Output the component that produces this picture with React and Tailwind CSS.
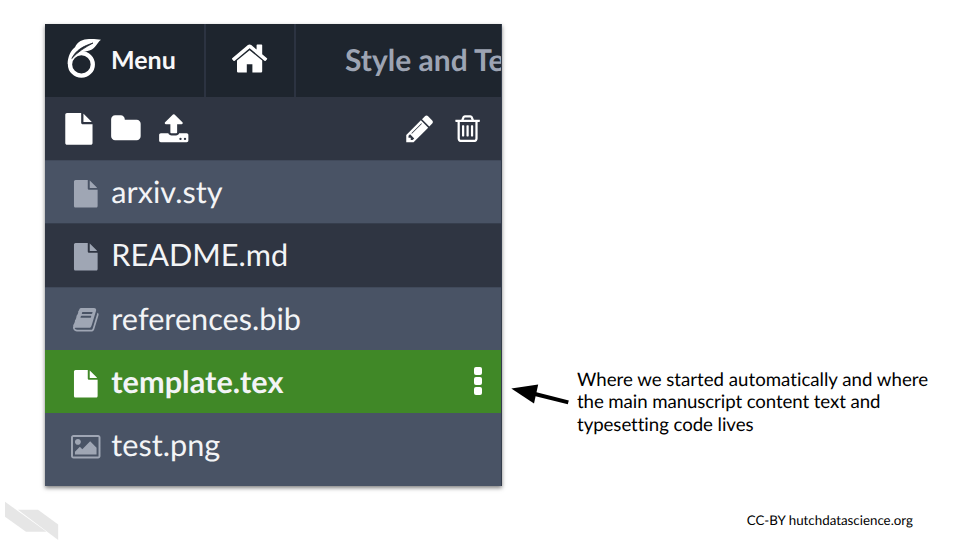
import React from "react";

const PATHS = {
  home: "M1472 992v480q0 26-19 45t-45 19h-384v-384h-256v384h-384q-26 0-45-19t-19-45v-480q0-1 .5-3t.5-3l575-474 575 474q1 2 1 6zm223-69l-62 74q-8 9-21 11h-3q-13 0-21-7l-692-577-692 577q-12 8-24 7-13-2-21-11l-62-74q-8-10-7-23.5t11-21.5l719-599q32-26 76-26t76 26l244 204v-195q0-14 9-23t23-9h192q14 0 23 9t9 23v408l219 182q10 8 11 21.5t-7 23.5z",
  trash: "M704 736v576q0 14-9 23t-23 9h-64q-14 0-23-9t-9-23v-576q0-14 9-23t23-9h64q14 0 23 9t9 23zm256 0v576q0 14-9 23t-23 9h-64q-14 0-23-9t-9-23v-576q0-14 9-23t23-9h64q14 0 23 9t9 23zm256 0v576q0 14-9 23t-23 9h-64q-14 0-23-9t-9-23v-576q0-14 9-23t23-9h64q14 0 23 9t9 23zm128 724v-948h-896v948q0 22 7 40.5t14.5 27 10.5 8.5h832q3 0 10.5-8.5t14.5-27 7-40.5zm-672-1076h448l-48-117q-7-9-17-11h-317q-10 2-17 11zm928 32v64q0 14-9 23t-23 9h-96v948q0 83-47 143.5t-113 60.5h-832q-66 0-113-58.5t-47-141.5v-952h-96q-14 0-23-9t-9-23v-64q0-14 9-23t23-9h309l70-167q15-37 54-63t79-26h320q40 0 79 26t54 63l70 167h309q14 0 23 9t9 23z",
  pencil: "M491 1536l91-91-235-235-91 91v107h128v128h107zm523-928q0-22-22-22-10 0-17 7l-542 542q-7 7-7 17 0 22 22 22 10 0 17-7l542-542q7-7 7-17zm-54-192l416 416-832 832h-416v-416zm683 96q0 53-37 90l-166 166-416-416 166-165q36-38 90-38 53 0 91 38l235 234q37 39 37 91z",
  folder: "M1728 608v704q0 92-66 158t-158 66h-1216q-92 0-158-66t-66-158v-960q0-92 66-158t158-66h320q92 0 158 66t66 158v32h672q92 0 158 66t66 158z",
  file: "M1152 512v-472q22 14 36 28l408 408q14 14 28 36h-472zm-128 32q0 40 28 68t68 28h544v1056q0 40-28 68t-68 28h-1344q-40 0-68-28t-28-68v-1600q0-40 28-68t68-28h800v544z",
  upload: "M1344 1472q0-26-19-45t-45-19-45 19-19 45 19 45 45 19 45-19 19-45zm256 0q0-26-19-45t-45-19-45 19-19 45 19 45 45 19 45-19 19-45zm128-224v320q0 40-28 68t-68 28h-1472q-40 0-68-28t-28-68v-320q0-40 28-68t68-28h427q21 56 70.5 92t110.5 36h256q61 0 110.5-36t70.5-92h427q40 0 68 28t28 68zm-325-648q-17 40-59 40h-256v448q0 26-19 45t-45 19h-256q-26 0-45-19t-19-45v-448h-256q-42 0-59-40-17-39 14-69l448-448q18-19 45-19t45 19l448 448q31 30 14 69z",
  book: "M1703 478q40 57 18 129l-275 906q-19 64-76.5 107.5t-122.5 43.5h-923q-77 0-148.5-53.5t-99.5-131.5q-24-67-2-127 0-4 3-27t4-37q1-8-3-21.5t-3-19.5q2-11 8-21t16.5-23.5 16.5-23.5q23-38 45-91.5t30-91.5q3-10 .5-30t-.5-28q3-11 17-28t17-23q21-36 42-92t25-90q1-9-2.5-32t.5-28q4-13 22-30.5t22-22.5q19-26 42.5-84.5t27.5-96.5q1-8-3-25.5t-2-26.5q2-8 9-18t18-23 17-21q8-12 16.5-30.5t15-35 16-36 19.5-32 26.5-23.5 36-11.5 47.5 5.5l-1 3q38-9 51-9h761q74 0 114 56t18 130l-274 906q-36 119-71.5 153.5t-128.5 34.5h-869q-27 0-38 15-11 16-1 43 24 70 144 70h923q29 0 56-15.5t35-41.5l300-987q7-22 5-57 38 15 59 43zm-1064 2q-4 13 2 22.5t20 9.5h608q13 0 25.5-9.5t16.5-22.5l21-64q4-13-2-22.5t-20-9.5h-608q-13 0-25.5 9.5t-16.5 22.5zm-83 256q-4 13 2 22.5t20 9.5h608q13 0 25.5-9.5t16.5-22.5l21-64q4-13-2-22.5t-20-9.5h-608q-13 0-25.5 9.5t-16.5 22.5z",
  image: "M576 576q0 80-56 136t-136 56-136-56-56-136 56-136 136-56 136 56 56 136zm1024 384v448h-1408v-192l320-320 160 160 512-512zm96-704h-1600q-13 0-22.5 9.5t-9.5 22.5v1216q0 13 9.5 22.5t22.5 9.5h1600q13 0 22.5-9.5t9.5-22.5v-1216q0-13-9.5-22.5t-22.5-9.5zm160 32v1216q0 66-47 113t-113 47h-1600q-66 0-113-47t-47-113v-1216q0-66 47-113t113-47h1600q66 0 113 47t47 113z",
};

function Icon({ name, className }) {
  return (
    <svg viewBox="0 0 1792 1792" fill="currentColor" className={`shrink-0 overflow-visible ${className}`}>
      <path d={PATHS[name]} />
    </svg>
  );
}

function Logo() {
  return (
    <svg viewBox="65 36 40 44" className="ml-[20px] mt-[12px] h-[44px] w-[40px] shrink-0">
      <ellipse cx="81.4" cy="64.4" rx="11.4" ry="11.2" fill="none" stroke="#fff" strokeWidth="4.3" />
      <path d="M67.600 64C67.800 56 71 50.500 75 47.300C77 41.500 83 39 89 38.900C94 38.900 97.500 38.800 101 39.800C96.500 43 95.500 50.300 86.500 51.200C79 52 73 55 70.500 61Z" fill="#fff" />
      <path d="M71.800 58.500C76 50 83 46.300 93 43C85 47.500 78 51.500 71.800 58.500Z" fill="#1e252e" stroke="#1e252e" strokeWidth="0.800" />
    </svg>
  );
}

function Row({ icon, iconClass, label, rowClass, labelClass = "text-[30.700px]", children }) {
  return (
    <div className={`flex shrink-0 items-start border-t ${rowClass}`}>
      <div className="flex w-[66.300px] shrink-0">
        <Icon name={icon} className={iconClass} />
      </div>
      <span className={`mt-[12px] whitespace-nowrap leading-[38px] text-[#f3f4f6] ${labelClass}`}>{label}</span>
      {children}
    </div>
  );
}

export default function App() {
  return (
    <div className="flex h-[540px] w-[960px] flex-col overflow-hidden bg-white font-['Lato',sans-serif] text-black [font-variant-ligatures:none] [text-rendering:geometricPrecision]">
      <main className="flex h-[478px] shrink-0 items-start pl-[45px] pt-[24px]">
        <section className="flex h-[462px] w-[457px] shrink-0 flex-col overflow-hidden border-r border-[#333c4c] bg-[#495365] shadow-[0_2px_4px_rgba(0,0,0,0.5)]">
          <header className="flex h-[73px] shrink-0 bg-[#1e252e]">
            <div className="flex w-[160.500px] shrink-0 border-r-2 border-[#2c3341]">
              <Logo />
              <span className="ml-[6px] mt-[20px] text-[25px] font-bold leading-[32px] text-[#f8f8f9]">Menu</span>
            </div>
            <div className="flex w-[90px] shrink-0 border-r-2 border-[#2c3341]">
              <Icon name="home" className="ml-[24.200px] mt-[14.700px] size-[39.200px] text-white" />
            </div>
            <span className="ml-[49.500px] mt-[17px] whitespace-nowrap text-[30px] font-bold leading-[38px] text-[#9da4b3]">Style and Template</span>
          </header>
          <div className="flex h-[63px] shrink-0 items-start bg-[#2f3542] text-white">
            <Icon name="file" className="ml-[17.800px] mt-[16px] size-[31.800px]" />
            <Icon name="folder" className="ml-[15.800px] mt-[16.200px] size-[31.800px]" />
            <Icon name="upload" className="ml-[15.400px] mt-[16.400px] size-[31.500px]" />
            <Icon name="pencil" className="ml-[214.900px] mt-[16.400px] size-[31.500px]" />
            <Icon name="trash" className="ml-[16.200px] mt-[16.300px] size-[31.200px]" />
          </div>
          <Row icon="file" iconClass="ml-[27.200px] mt-[18.500px] size-[27.600px] text-[#9fa6b4]" label="arxiv.sty" rowClass="h-[63px] bg-[#495365] border-[#414a5b]" />
          <Row icon="file" iconClass="ml-[27.200px] mt-[18.700px] size-[27.600px] text-[#9fa6b4]" label="README.md" rowClass="h-[63.500px] bg-[#2f3542] border-[#363e4d]" />
          <Row icon="book" iconClass="ml-[27.200px] mt-[18.500px] size-[27.600px] text-[#9fa6b4]" label="references.bib" rowClass="h-[63.500px] bg-[#495365] border-[#414a5b]" />
          <Row icon="file" iconClass="ml-[27.200px] mt-[18.500px] size-[27.600px] text-white" label="template.tex" labelClass="text-[30.700px] font-bold" rowClass="h-[63px] bg-[#408827] border-[#408827]">
            <div className="ml-auto mr-[19.500px] mt-[16px] flex flex-col gap-[2px]">
              <i className="size-[8px] rounded-[2px] bg-white" />
              <i className="size-[8px] rounded-[2px] bg-white" />
              <i className="size-[8px] rounded-[2px] bg-white" />
            </div>
          </Row>
          <Row icon="image" iconClass="ml-[27px] mt-[19px] size-[27.500px] text-[#9fa6b4]" label="test.png" rowClass="h-[73px] bg-[#495365] border-[#495365]" />
        </section>
        <svg viewBox="508 380 64 28" className="ml-[6px] mt-[356px] h-[28px] w-[64px] shrink-0">
          <path d="M535 394L568.300 402.400" stroke="#000" strokeWidth="4" />
          <path d="M511.300 388.500L538.200 384.600L534 403.500Z" />
        </svg>
        <p className="ml-[5px] mt-[344px] whitespace-nowrap text-[18.667px] leading-[22.400px]">
          Where we started automatically and where<br />
          <span className="tracking-[-0.090px]">the main manuscript content text and</span><br />
          <span className="tracking-[-0.060px]">typesetting code lives</span>
        </p>
      </main>
      <footer className="mt-[20px] flex h-[42px] shrink-0 items-start justify-between pl-[5px] pr-[47px]">
        <svg viewBox="5 500 54 40" className="mt-[2px] h-[40px] w-[54px] shrink-0" fill="#e6e6e6">
          <path d="M5 501.700L46.500 531.800H26L5 516.700Z" />
          <path d="M18 509.800H38L58.200 524.400V540Z" />
        </svg>
        <span className="mt-[14px] text-[13.333px] leading-[16px]">CC-BY hutchdatascience.org</span>
      </footer>
    </div>
  );
}
